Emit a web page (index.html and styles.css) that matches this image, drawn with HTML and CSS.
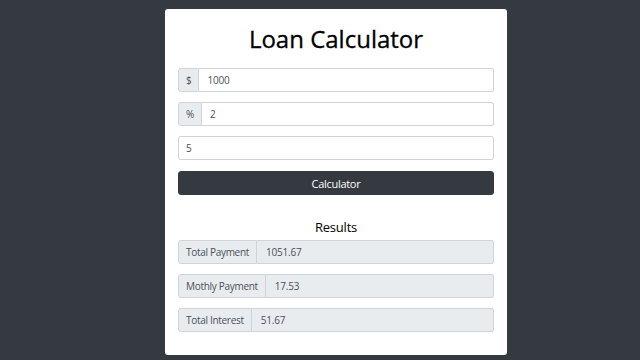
FILE: index.html
```html
<!DOCTYPE html>
<html>
<head>
<meta charset="utf-8">
<link rel="stylesheet" href="styles.css">
</head>
<body>
<div class="page">
  <div class="card">
    <h1 class="title">Loan Calculator</h1>
    <form class="form">
      <div class="group">
        <span class="addon">$</span>
        <input class="field" type="text" value="1000">
      </div>
      <div class="group">
        <span class="addon">%</span>
        <input class="field" type="text" value="2">
      </div>
      <div class="group">
        <input class="field solo" type="text" value="5">
      </div>
      <button class="btn" type="button">Calculator</button>
    </form>
    <h5 class="results-title">Results</h5>
    <div class="results">
      <div class="group">
        <span class="addon">Total Payment</span>
        <input class="field ro" type="text" value="1051.67" readonly>
      </div>
      <div class="group">
        <span class="addon">Mothly Payment</span>
        <input class="field ro" type="text" value="17.53" readonly>
      </div>
      <div class="group">
        <span class="addon">Total Interest</span>
        <input class="field ro" type="text" value="51.67" readonly>
      </div>
    </div>
  </div>
</div>
</body>
</html>
```
FILE: styles.css
```css
html, body {
  margin: 0;
  padding: 0;
  background: #343a40;
  font-family: "Open Sans", "Noto Sans", sans-serif;
}
.page {
  padding: 9px 0 0 164px;
}
.card {
  width: 316px;
  height: 309px;
  background: #ffffff;
  border-radius: 3px;
  padding: 14px 13px 23px 13px;
  display: flex;
  flex-direction: column;
  color: #212529;
  box-sizing: content-box;
  margin-left: 1px;
}
.title {
  margin: 0 0 13px 0;
  font-size: 24px;
  line-height: 32px;
  font-weight: 500;
  text-align: center;
  color: #000;
  letter-spacing: 0;
  -webkit-text-stroke: 0.3px #000;
}
.form, .results {
  display: flex;
  flex-direction: column;
  gap: 10px;
  margin: 0;
}
.group {
  display: flex;
  height: 24px;
}
.addon {
  display: flex;
  align-items: center;
  padding: 0 7px 0 7px;
  background: #e9ecef;
  border: 1px solid #ced4da;
  border-radius: 3px 0 0 3px;
  font-size: 10px;
  color: #495057;
  white-space: nowrap;
  letter-spacing: -0.3px;
}
.field {
  flex: 1;
  min-width: 0;
  margin: 0;
  border: 1px solid #ced4da;
  border-left: 0;
  border-radius: 0 3px 3px 0;
  padding: 0 8px;
  font-family: inherit;
  font-size: 10px;
  color: #495057;
  background: #fff;
  outline: none;
  box-sizing: border-box;
  height: 24px;
  letter-spacing: -0.2px;
}
.field.solo {
  border-left: 1px solid #ced4da;
  border-radius: 3px;
  padding-left: 7px;
}
.field.ro {
  background: #e9ecef;
  padding-left: 9px;
}
.btn {
  margin-top: 1px;
  height: 24px;
  background: #343a40;
  border: 1px solid #343a40;
  border-radius: 3px;
  color: #fff;
  font-family: inherit;
  font-size: 11px;
  letter-spacing: -0.3px;
  padding: 0;
}
.results-title {
  margin: 22px 0 3px 0;
  font-size: 13px;
  line-height: 20px;
  font-weight: 500;
  text-align: center;
  color: #000;
  letter-spacing: -0.2px;
}
```
